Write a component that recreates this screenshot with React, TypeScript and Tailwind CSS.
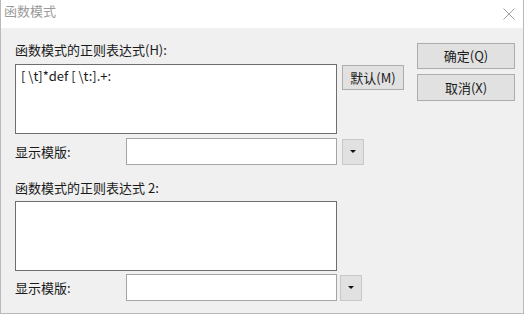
import React from 'react'

const font = { fontFamily: '"Noto Sans CJK SC", "Noto Sans", sans-serif' }

const DropButton = () => (
    <div className="flex h-[26px] w-[22px] items-center justify-center border border-[#c8c8c8] bg-[#e1e1e1]">
        <svg width="6" height="3" viewBox="0 0 6 3">
            <path d="M0 0h6L3 3z" fill="#111" />
        </svg>
    </div>
)

const TemplateRow = ({ gap }: { gap: string }) => (
    <div className="flex items-center">
        <span className="w-[111px] text-[13px] text-[#1a1a1a]">显示模版:</span>
        <div className="h-[27px] w-[211px] border border-[#a5a5a5] bg-white" />
        <div className={gap}>
            <DropButton />
        </div>
    </div>
)

const App = () => {
    return (
        <div className="h-[318px] w-[529px] bg-white" style={font}>
            <div className="h-[314px] w-[524px] border-l border-r border-b border-[#b9b9b9] bg-[#f0f0f0]">
                <div className="flex h-[28px] items-start justify-between bg-white">
                    <span className="pl-[3px] pt-[2px] text-[13px] leading-[18px] text-[#9a9a9a]">函数模式</span>
                    <svg className="mr-[8px] mt-[8px]" width="12" height="12" viewBox="0 0 12 12">
                        <path d="M0.5 0.5l11 11M11.5 0.5l-11 11" stroke="#a0a0a0" strokeWidth="1" />
                    </svg>
                </div>
                <div className="flex pl-[14px]">
                    <div className="w-[390px]">
                        <div className="h-[36px] pt-[13px] text-[13px] leading-[18px] text-[#1a1a1a]">函数模式的正则表达式(H):</div>
                        <div className="flex items-start">
                            <div className="h-[70px] w-[322px] border border-[#6e6e6e] bg-white px-[5px] pt-[3px] text-[13px] leading-[16px] text-[#1a1a1a]">
                                {'[ \\t]*def [ \\t:].+:'}
                            </div>
                            <div className="ml-[5px] mt-[1px] flex h-[25px] w-[62px] items-center justify-center border border-[#adadad] bg-[#e1e1e1] text-[13px] text-[#1a1a1a]">
                                默认(M)
                            </div>
                        </div>
                        <div className="mt-[4px]">
                            <TemplateRow gap="ml-[5px]" />
                        </div>
                        <div className="mt-[14px] h-[22px] text-[13px] leading-[18px] text-[#1a1a1a]">函数模式的正则表达式 2:</div>
                        <div className="h-[70px] w-[322px] border border-[#6e6e6e] bg-white" />
                        <div className="mt-[3px]">
                            <TemplateRow gap="ml-[3px]" />
                        </div>
                    </div>
                    <div className="ml-[12px] flex flex-col gap-[5px] pt-[15px]">
                        <div className="flex h-[26px] w-[98px] items-center justify-center border border-[#adadad] bg-[#e1e1e1] text-[13px] text-[#1a1a1a]">
                            确定(Q)
                        </div>
                        <div className="flex h-[27px] w-[98px] items-center justify-center border border-[#adadad] bg-[#e1e1e1] text-[13px] text-[#1a1a1a]">
                            取消(X)
                        </div>
                    </div>
                </div>
            </div>
        </div>
    )
}

export default App
